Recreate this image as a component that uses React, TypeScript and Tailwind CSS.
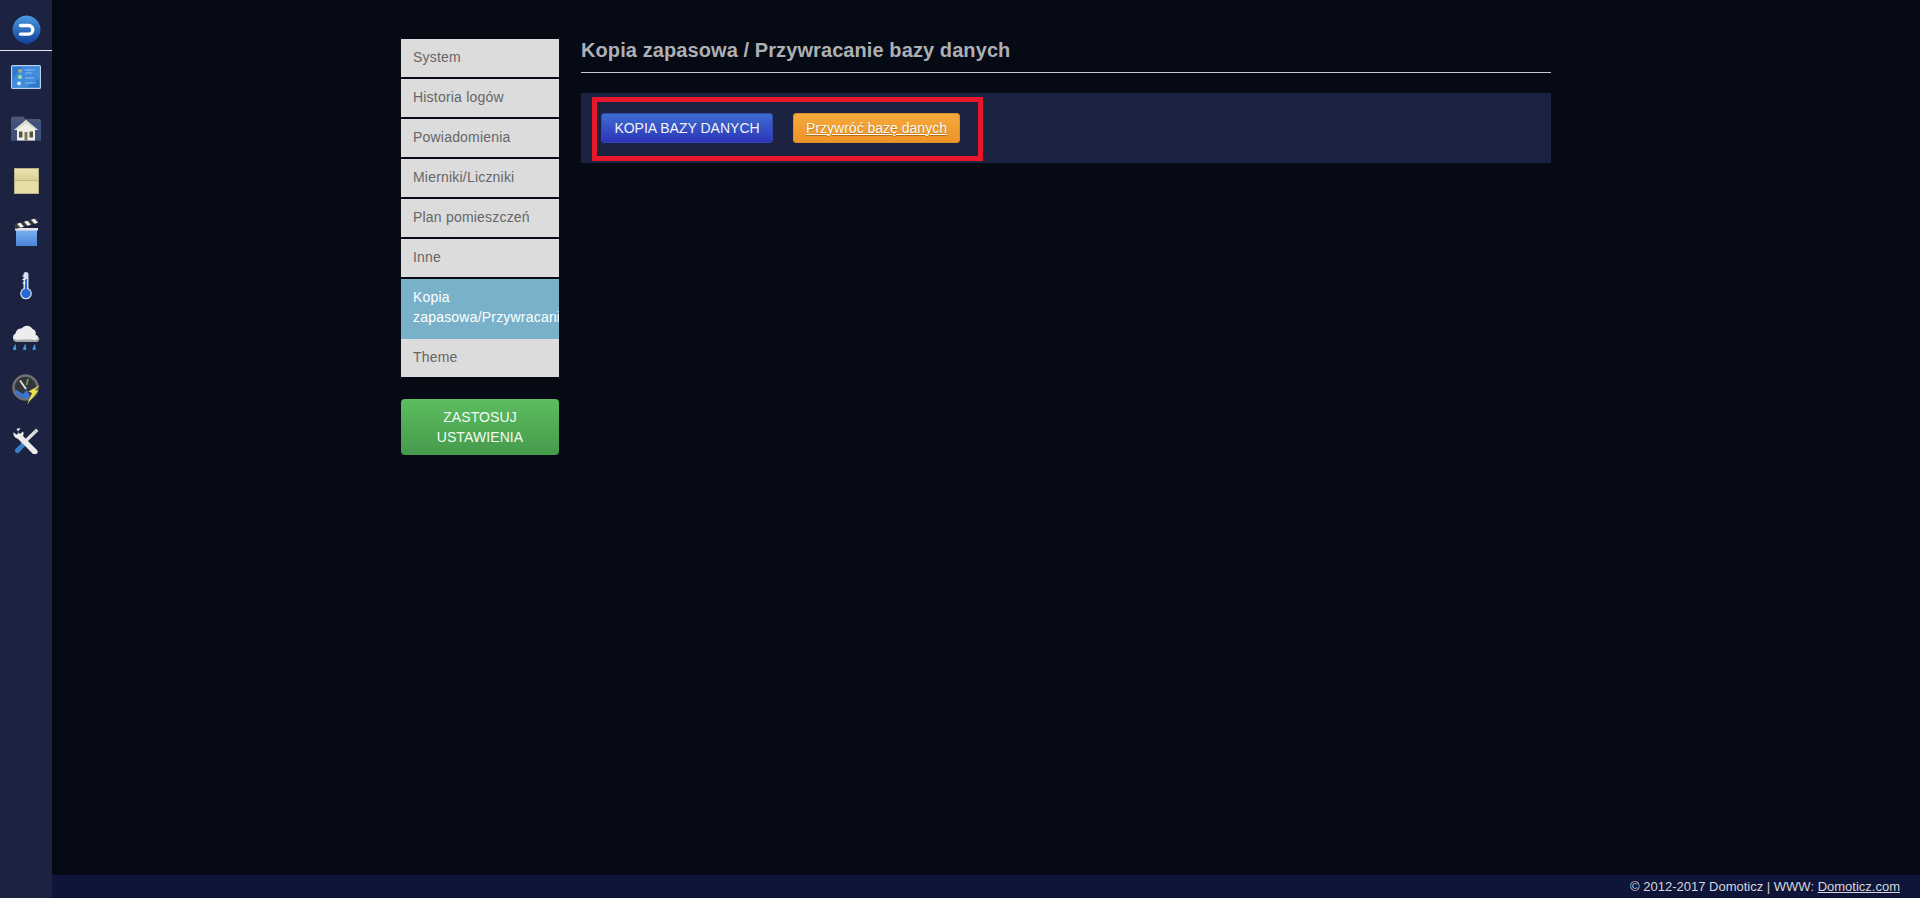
const font = "[font-family:'Liberation_Sans',Arial,sans-serif]";

function Logo() {
  return (
    <svg width="29" height="30" viewBox="0 0 29 30">
      <defs>
        <linearGradient id="lg" x1="0" y1="0" x2="0" y2="1">
          <stop offset="0" stopColor="#4a9be0" />
          <stop offset="1" stopColor="#123e98" />
        </linearGradient>
      </defs>
      <path d="M14.500 0.500a14 14 0 0 1 7 26.100L14.500 29.500l-7-2.900A14 14 0 0 1 14.500 .5Z" fill="url(#lg)" />
      <path d="M8.500 10.500h8a4.300 4.300 0 0 1 0 8.600h-8" fill="none" stroke="#fff" strokeWidth="3.400" strokeLinecap="round" />
    </svg>
  );
}

function Dashboard() {
  return (
    <svg width="30" height="24" viewBox="0 0 30 24">
      <rect x="0.600" y="0.600" width="28.800" height="22.800" rx="1" fill="#2c76cc" stroke="#b9d2ee" strokeWidth="1.200" />
      <path d="M12 1.200 28.800 1.200V13L15 22.800H1.200V14Z" fill="#4f9ae6" opacity=".6" />
      <circle cx="9" cy="6" r="2" fill="#a5a58c" />
      <circle cx="9" cy="12" r="2" fill="#a6e39a" />
      <circle cx="8" cy="18.500" r="2" fill="#d8e6f5" />
      <path d="M14 5h10M14 8h7M14 13h9M14 18h11" stroke="#8cbcec" strokeWidth="1" />
    </svg>
  );
}

function House() {
  return (
    <svg width="30" height="25" viewBox="0 0 30 25">
      <path d="M3 0.500h9L14.500 3H28.500A1.500 1.500 0 0 1 30 4.500V24.500H0V3A2.500 2.500 0 0 1 3 .5Z" fill="#4a5873" />
      <path d="M0 5.500h30V24.500H0Z" fill="#40527c" />
      <path d="M15 4 27 14h-3v10.500H6V14H3Z" fill="#f0f0ea" />
      <path d="M15 4 27 14h-2.500L15 7.500 5.500 14H3Z" fill="#dedcd0" />
      <rect x="8" y="15.500" width="3.500" height="6" fill="#54543f" />
      <rect x="18.500" y="15.500" width="3.500" height="6" fill="#54543f" />
      <rect x="13.500" y="16" width="3" height="8.500" fill="#7a7658" />
    </svg>
  );
}

function Blind() {
  return (
    <svg width="25" height="26" viewBox="0 0 25 26">
      <defs>
        <linearGradient id="bl" x1="0" y1="0" x2="0" y2="1">
          <stop offset="0" stopColor="#ece4b0" />
          <stop offset=".5" stopColor="#d8cf98" />
          <stop offset=".52" stopColor="#e6dca6" />
          <stop offset="1" stopColor="#e8dfa8" />
        </linearGradient>
      </defs>
      <rect x="0.500" y="0.500" width="24" height="25" fill="url(#bl)" stroke="#b8b08a" />
      <path d="M1 12.500h23" stroke="#c4ba85" strokeWidth="1" />
    </svg>
  );
}

function Clapper() {
  return (
    <svg width="25" height="28" viewBox="0 0 25 28">
      <defs>
        <linearGradient id="cl" x1="0" y1="0" x2="0" y2="1">
          <stop offset="0" stopColor="#78b2f2" />
          <stop offset="1" stopColor="#4a84d8" />
        </linearGradient>
      </defs>
      <rect x="2" y="12" width="21" height="16" fill="url(#cl)" />
      <rect x="1" y="10" width="23" height="2.500" fill="#e4e4e4" />
      <path d="M0 6.500 23 0l1.500 4.500L1.500 11Z" fill="#3a3a3a" />
      <path d="M3 5.700 6.500 9.700l3.500-1L6.500 4.700ZM10 3.700l3.500 4 3.500-1-3.500-4ZM17 1.700l3.500 4 3.500-1L20.500.7Z" fill="#f0f0f0" />
    </svg>
  );
}

function Thermo() {
  return (
    <svg width="12" height="28" viewBox="0 0 12 28">
      <path d="M3.500 2.500a2.500 2.500 0 0 1 5 0v13.800a5.800 5.800 0 1 1-5 0Z" fill="#d4def0" />
      <circle cx="6" cy="21.500" r="4.600" fill="#2468d4" />
      <rect x="5" y="7" width="2" height="11" fill="#2468d4" />
      <path d="M2.500 4h3M2.500 7.500h3M2.500 11h3" stroke="#ffffff" strokeWidth="1.200" />
    </svg>
  );
}

function Rain() {
  return (
    <svg width="28" height="26" viewBox="0 0 28 26">
      <path d="M5 18A4.500 4.500 0 0 1 3.500 9.500 5.500 5.500 0 0 1 9.500 4.500 6.500 6.500 0 0 1 20.500 5a4.500 4.500 0 0 1 3 6A3.600 3.600 0 0 1 24 18Z" fill="#ededed" />
      <path d="M1 14.500a4.500 4.500 0 0 0 4 3.500h19a3.600 3.600 0 0 0 3.500-4A8 8 0 0 1 20 15.500H8a8 8 0 0 1-7-1Z" fill="#a6a6a6" />
      <path d="M3.500 19.500 1 24.500a1.800 1.800 0 0 0 3.300 1ZM13.500 19.500 11 24.500a1.800 1.800 0 0 0 3.300 1ZM23 19.500 20.500 24.500a1.800 1.800 0 0 0 3.300 1Z" fill="#3f98de" />
    </svg>
  );
}

function Gauge() {
  return (
    <svg width="28" height="31" viewBox="0 0 28 31">
      <circle cx="13.500" cy="13.500" r="12" fill="#33353c" stroke="#717171" strokeWidth="2.500" />
      <path d="M2.800 15a11 11 0 0 0 16 8.500L15 16l-4 4Z" fill="#3e72cc" />
      <path d="M8 6.500 14 15" stroke="#e6e6e6" strokeWidth="1.800" />
      <path d="M16 5l-1.500 6" stroke="#6fb04a" strokeWidth="1.500" />
      <path d="M28 11 16.500 17.500l3.500 1.500-5 11.500L26 17l-3-1Z" fill="#eee04a" />
    </svg>
  );
}

function Tools() {
  return (
    <svg width="26" height="26" viewBox="0 0 26 26">
      <path d="M24 2 9 16.500" stroke="#e0e0e0" strokeWidth="3.200" />
      <path d="M23 0.500 25.500 3 22.500 5.500 20.500 3.500Z" fill="#cfcfcf" />
      <path d="M11 12.500 2 21.500a2.800 2.800 0 0 0 3.500 3.500L14 16Z" fill="#3a7ccc" />
      <path d="M7.500 7 23 22.500a1 1 0 0 1-2.500 2.500L5 9.500Z" fill="#ececec" strokeWidth="2" stroke="#ececec" strokeLinejoin="round" />
      <path d="M7.500 .5 4.800 3.500 7 6 10 3.500A5 5 0 0 1 4 10.500 5 5 0 0 1 .7 4.200L3.500 6.800 6 4.500 3.500 1.200A5 5 0 0 1 7.500 .5Z" fill="#ececec" />
    </svg>
  );
}

const items = ["System", "Historia logów", "Powiadomienia", "Mierniki/Liczniki", "Plan pomieszczeń", "Inne"];

export default function App() {
  return (
    <div className={`flex h-[898px] w-[1920px] overflow-hidden bg-[#050a15] text-[14px] ${font}`}>
      <aside className="flex h-full w-[52px] shrink-0 flex-col items-center bg-[#1c2340]">
        <div className="flex h-[51px] w-full justify-center border-b border-[#e8e8e8] pt-[15px]">
          <Logo />
        </div>
        <div className="mt-[14px] flex h-[24px] w-full items-center justify-center"><Dashboard /></div>
        <div className="mt-[27px] flex h-[25px] w-full items-center justify-center"><House /></div>
        <div className="mt-[27px] flex h-[26px] w-full items-center justify-center"><Blind /></div>
        <div className="mt-[24px] flex h-[28px] w-full items-center justify-center"><Clapper /></div>
        <div className="mt-[26px] flex h-[28px] w-full items-center justify-center"><Thermo /></div>
        <div className="mt-[24px] flex h-[26px] w-full items-center justify-center"><Rain /></div>
        <div className="mt-[24px] flex h-[31px] w-full items-center justify-center"><Gauge /></div>
        <div className="mt-[23px] flex h-[26px] w-full items-center justify-center"><Tools /></div>
      </aside>

      <div className="flex h-full min-w-0 flex-1 flex-col">
        <main className="flex min-h-0 flex-1 gap-[22px] pl-[349px] pt-[39px]">
          <div className="w-[158px] shrink-0">
            <nav className="flex flex-col tracking-[0.2px]">
              {items.map((t) => (
                <div key={t} className="mb-[2px] h-[38px] bg-[#dcdcdc] pl-[12px] pt-[8px] leading-[20px] text-[#666666]">{t}</div>
              ))}
              <div className="h-[60px] overflow-hidden bg-[#78b1c9] pl-[12px] pt-[8px] leading-[20px] text-white">
                <div>Kopia</div>
                <div className="whitespace-nowrap">zapasowa/Przywracanie</div>
              </div>
              <div className="h-[38px] bg-[#dcdcdc] pl-[12px] pt-[8px] leading-[20px] text-[#666666]">Theme</div>
            </nav>
            <button className="mt-[22px] h-[56px] w-full rounded-[4px] bg-gradient-to-b from-[#5cbd60] to-[#459a4b] px-2 text-center leading-[20px] tracking-[0.1px] text-[#f4fbf4]">
              ZASTOSUJ<br />USTAWIENIA
            </button>
          </div>

          <div className="w-[970px] shrink-0">
            <div className="h-[34px] border-b border-[#c8c8d0] text-[20px] font-bold leading-[23px] tracking-[0.09px] text-[#aeb0b4]">
              Kopia zapasowa / Przywracanie bazy danych
            </div>
            <div className="mt-[20px] h-[70px] bg-[#1c2340] pl-[11px] pt-[4px]">
              <div className="flex h-[64px] w-[391px] items-center border-[5px] border-[#e8172c] pb-[2px] pl-[4px]">
                <button className="flex h-[30px] w-[172px] items-center justify-center rounded-[3px] border border-[#3148b0] bg-gradient-to-b from-[#3f6ccf] to-[#2e33ba] text-[#f2f2f6]">KOPIA BAZY DANYCH</button>
                <button className="ml-[20px] flex h-[30px] w-[167px] items-center justify-center rounded-[3px] border border-[#dd8f2e] bg-gradient-to-b from-[#f6aa3c] to-[#ee9328] text-[#fdfdf6] underline [text-shadow:0_1px_1px_rgba(120,70,0,0.5)]">Przywróć bazę danych</button>
              </div>
            </div>
          </div>
        </main>
        <footer className="flex h-[23px] items-center justify-end bg-[#0e1538] pr-[20px] pt-[1px] text-[13px] text-[#d6d7de]">
          © 2012-2017 Domoticz | WWW:&nbsp;<a className="underline">Domoticz.com</a>
        </footer>
      </div>
    </div>
  );
}
